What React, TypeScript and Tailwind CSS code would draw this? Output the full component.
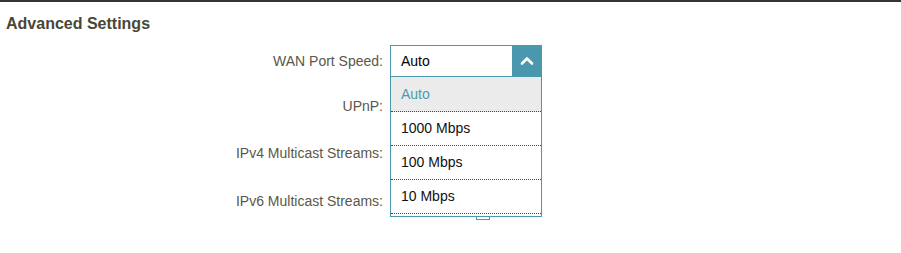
import { useState } from 'react';

const speeds = ['Auto', '1000 Mbps', '100 Mbps', '10 Mbps'];

function Row({ label, className, children }: { label: string; className: string; children?: React.ReactNode }) {
  return (
    <div className={`flex items-center ${className}`}>
      <div className="w-[383px] text-right text-[14px] text-[#5b5749]">{label}</div>
      <div className="ml-[7px] relative h-full w-[152px] flex">{children}</div>
    </div>
  );
}

export default function App() {
  const [speed, setSpeed] = useState('Auto');
  const [open, setOpen] = useState(true);

  return (
    <div className="w-[901px] h-[253px] bg-white border-t-2 border-[#353535] font-['Liberation_Sans',Arial,sans-serif]">
      {/* Title */}
      <div className="pl-[6px] pt-[12px] text-[16px] leading-[20px] font-bold text-[#4a4636]">
        Advanced Settings
      </div>

      {/* Form */}
      <div className="flex flex-col">
        <Row label="WAN Port Speed:" className="mt-[11px] h-[32px] relative z-20">
          <div
            className="w-full h-full flex border border-[#4a98ad] cursor-pointer"
            onClick={() => setOpen(!open)}
          >
            <span className="flex-1 pl-[10px] flex items-center text-[14px] text-black">{speed}</span>
            <span className="w-[30px] bg-[#4a98ad] flex items-center justify-center -mr-px -mt-px -mb-px">
              <svg width="14" height="10" viewBox="0 0 14 10" fill="none">
                <path d="M2 7.5 L7 2.5 L12 7.5" stroke="white" strokeWidth="2.6" strokeLinecap="round" strokeLinejoin="round" />
              </svg>
            </span>
          </div>

          {open && (
            <div className="absolute top-full left-0 w-[152px] bg-white border border-t-0 border-[#4a98ad] pb-[2px]">
              {speeds.map((s, i) => (
                <div
                  key={s}
                  onClick={() => {
                    setSpeed(s);
                    setOpen(false);
                  }}
                  className={`${i === 0 ? 'h-[35px]' : 'h-[34px]'} pl-[10px] flex items-center text-[14px] border-b border-dotted border-[#444] cursor-pointer ${
                    s === speed ? 'bg-[#ebebeb] text-[#4b9ab3]' : 'text-[#111]'
                  }`}
                >
                  {s}
                </div>
              ))}
            </div>
          )}
        </Row>

        <Row label="UPnP:" className="mt-[13px] h-[32px]" />
        <Row label="IPv4 Multicast Streams:" className="mt-[15px] h-[32px]" />
        <Row label="IPv6 Multicast Streams:" className="mt-[16px] h-[32px]">
          <div className="ml-[86px] mt-[12px] w-[14px] h-[23px] border border-[#4a98ad]" />
        </Row>
      </div>
    </div>
  );
}
